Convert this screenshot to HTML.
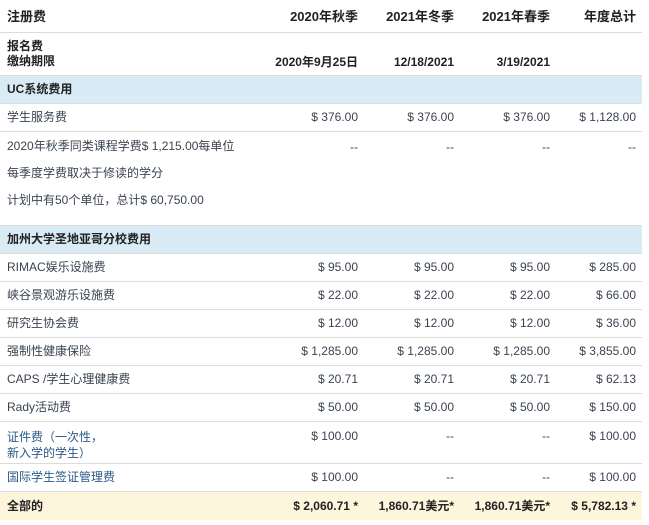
<!DOCTYPE html>
<html><head><meta charset="utf-8"><style>
body{margin:0;background:#fff;font-family:"Liberation Sans","Noto Sans CJK SC",sans-serif;font-size:12px;color:#3a4350;}
table{border-collapse:collapse;width:642px;table-layout:fixed;}
td{padding:0 6px 0 7px;vertical-align:middle;border-bottom:1px solid #dcdcdc;line-height:15px;}
col.c0{width:268px}col.c1{width:96px}col.c2{width:96px}col.c3{width:96px}col.c4{width:86px}
td.r{text-align:right}
tr.h td{font-weight:bold;color:#222;font-size:13px;height:32px}
tr.sec td{background:#d9ebf5;font-weight:bold;color:#222;height:27px}
tr.n td{height:27px}
tr.tot td{background:#fdf6dc;font-weight:bold;color:#222;height:28px;border-bottom:none}
.blue{color:#2b5a87}
</style></head><body>
<table>
<colgroup><col class="c0"><col class="c1"><col class="c2"><col class="c3"><col class="c4"></colgroup>
<tr class="h"><td>注册费</td><td class="r">2020年秋季</td><td class="r">2021年冬季</td><td class="r">2021年春季</td><td class="r">年度总计</td></tr>
<tr style="height:43px"><td style="font-weight:bold;color:#222;line-height:15px">报名费<br>缴纳期限</td><td class="r" style="font-weight:bold;color:#222;padding-top:16px">2020年9月25日</td><td class="r" style="font-weight:bold;color:#222;padding-top:16px">12/18/2021</td><td class="r" style="font-weight:bold;color:#222;padding-top:16px">3/19/2021</td><td></td></tr>
<tr class="sec"><td colspan="5">UC系统费用</td></tr>
<tr class="n"><td>学生服务费</td><td class="r">$ 376.00</td><td class="r">$ 376.00</td><td class="r">$ 376.00</td><td class="r">$ 1,128.00</td></tr>
<tr style="height:94px"><td style="vertical-align:top;padding-top:1px;line-height:27px">2020年秋季同类课程学费$ 1,215.00每单位<br>每季度学费取决于修读的学分<br>计划中有50个单位，总计$ 60,750.00</td><td class="r" style="vertical-align:top;padding-top:8px">--</td><td class="r" style="vertical-align:top;padding-top:8px">--</td><td class="r" style="vertical-align:top;padding-top:8px">--</td><td class="r" style="vertical-align:top;padding-top:8px">--</td></tr>
<tr class="sec"><td colspan="5">加州大学圣地亚哥分校费用</td></tr>
<tr class="n"><td>RIMAC娱乐设施费</td><td class="r">$ 95.00</td><td class="r">$ 95.00</td><td class="r">$ 95.00</td><td class="r">$ 285.00</td></tr>
<tr class="n"><td>峡谷景观游乐设施费</td><td class="r">$ 22.00</td><td class="r">$ 22.00</td><td class="r">$ 22.00</td><td class="r">$ 66.00</td></tr>
<tr class="n"><td>研究生协会费</td><td class="r">$ 12.00</td><td class="r">$ 12.00</td><td class="r">$ 12.00</td><td class="r">$ 36.00</td></tr>
<tr class="n"><td>强制性健康保险</td><td class="r">$ 1,285.00</td><td class="r">$ 1,285.00</td><td class="r">$ 1,285.00</td><td class="r">$ 3,855.00</td></tr>
<tr class="n"><td>CAPS /学生心理健康费</td><td class="r">$ 20.71</td><td class="r">$ 20.71</td><td class="r">$ 20.71</td><td class="r">$ 62.13</td></tr>
<tr class="n"><td>Rady活动费</td><td class="r">$ 50.00</td><td class="r">$ 50.00</td><td class="r">$ 50.00</td><td class="r">$ 150.00</td></tr>
<tr style="height:42px"><td class="blue" style="vertical-align:top;padding-top:7px;line-height:16px">证件费（一次性，<br>新入学的学生）</td><td class="r" style="vertical-align:top;padding-top:7px">$ 100.00</td><td class="r" style="vertical-align:top;padding-top:7px">--</td><td class="r" style="vertical-align:top;padding-top:7px">--</td><td class="r" style="vertical-align:top;padding-top:7px">$ 100.00</td></tr>
<tr class="n"><td class="blue">国际学生签证管理费</td><td class="r">$ 100.00</td><td class="r">--</td><td class="r">--</td><td class="r">$ 100.00</td></tr>
<tr class="tot"><td>全部的</td><td class="r">$ 2,060.71 *</td><td class="r">1,860.71美元*</td><td class="r">1,860.71美元*</td><td class="r">$ 5,782.13 *</td></tr>
</table>
</body></html>
